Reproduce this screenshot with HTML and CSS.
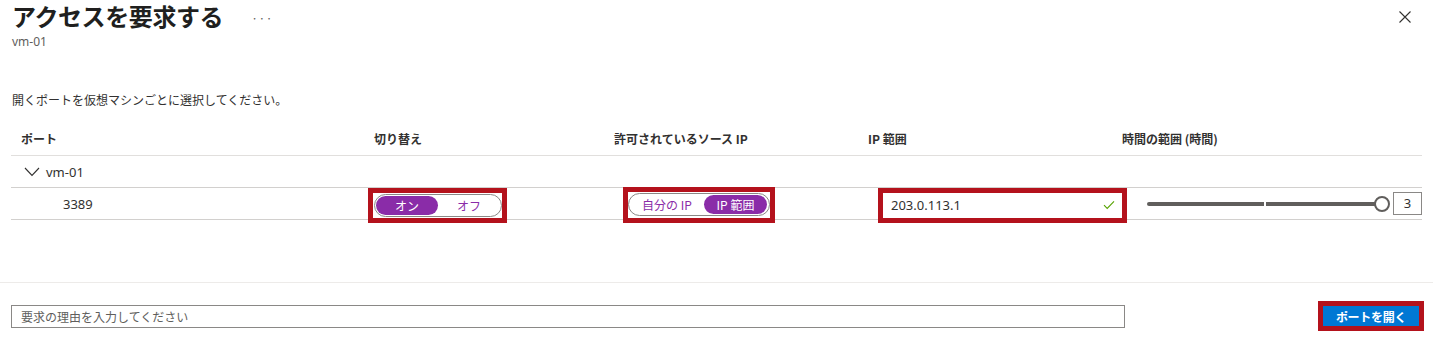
FILE: index.html
```html
<!DOCTYPE html>
<html lang="ja">
<head>
<meta charset="utf-8">
<link rel="stylesheet" href="styles.css">
</head>
<body>
<div class="page">
  <div class="top">
    <div class="titles">
      <div class="title-line">
        <h1 class="title">アクセスを要求する</h1>
        <span class="more">···</span>
      </div>
      <div class="subtitle">vm-01</div>
    </div>
    <svg class="close" width="14" height="14" viewBox="0 0 14 14"><path d="M1.5 1.5 L12.5 12.5 M12.5 1.5 L1.5 12.5" stroke="#323130" stroke-width="1.1" fill="none"/></svg>
  </div>

  <p class="intro">開くポートを仮想マシンごとに選択してください。</p>

  <div class="table">
    <div class="row head">
      <div class="h">ポート</div>
      <div class="h">切り替え</div>
      <div class="h">許可されているソース IP</div>
      <div class="h">IP 範囲</div>
      <div class="h">時間の範囲 (時間)</div>
    </div>
    <div class="row group">
      <div class="vm">
        <svg class="chev" width="16" height="10" viewBox="0 0 16 10"><path d="M1 1 L8 8.5 L15 1" stroke="#323130" stroke-width="1.1" fill="none"/></svg>
        <span>vm-01</span>
      </div>
    </div>
    <div class="row item">
      <div class="c port">3389</div>
      <div class="c c2">
        <div class="mark mark-toggle">
          <div class="pill">
            <span class="seg on">オン</span>
            <span class="seg">オフ</span>
          </div>
        </div>
      </div>
      <div class="c c3">
        <div class="mark mark-src">
          <div class="pill pill-src">
            <span class="seg seg-mine">自分の IP</span>
            <span class="seg on seg-range">IP 範囲</span>
          </div>
        </div>
      </div>
      <div class="c c4">
        <div class="mark mark-ip">
          <div class="ipfield">
            <span>203.0.113.1</span>
            <svg width="12" height="10" viewBox="0 0 12 10"><path d="M1 5.2 L4.2 8.4 L11 1.4" stroke="#57a300" stroke-width="1.1" fill="none"/></svg>
          </div>
        </div>
      </div>
      <div class="c c5">
        <div class="slider">
          <div class="track"><span class="tick"></span></div>
          <span class="thumb"></span>
        </div>
        <div class="numbox">3</div>
      </div>
    </div>
  </div>

  <div class="footer">
    <div class="reason">要求の理由を入力してください</div>
    <div class="mark mark-btn">
      <button class="btn">ポートを開く</button>
    </div>
  </div>
</div>
</body>
</html>
```

FILE: styles.css
```css
* { box-sizing: border-box; }
html, body { margin: 0; padding: 0; background: #fff; }
body {
  font-family: "Noto Sans CJK JP", "Noto Sans", sans-serif;
  color: #323130;
  font-size: 12px;
  width: 1433px;
  height: 346px;
  overflow: hidden;
}
.page { padding: 0 11px 0 11px; }

.top { display: flex; justify-content: space-between; align-items: flex-start; height: 92px; }
.titles { padding-left: 1px; }
.title-line { display: flex; align-items: center; height: 32px; }
.title { margin: 0; font-size: 24px; font-weight: 700; line-height: 32px; letter-spacing: -0.4px; color: #201f1e; }
.more { margin-left: 28px; color: #605e5c; font-size: 12px; letter-spacing: 0.5px; margin-top: 2px; }
.subtitle { font-family: "Noto Sans", sans-serif; color: #605e5c; font-size: 12px; line-height: 16px; margin-top: 2px; }
.close { margin-top: 10px; margin-right: 10px; }

.intro { margin: 0; line-height: 16px; height: 30px; padding-left: 1px; font-size: 12px; }

.table { width: 1411px; }
.row { display: grid; grid-template-columns: 353px 240px 254px 254px 310px; grid-template-rows: 100%; border-bottom: 1px solid #e1dfdd; align-items: center; }
.row.head { height: 34px; font-weight: 700; }
.h { padding-left: 10px; white-space: nowrap; }
.row.group { height: 32px; display: flex; border-bottom-color: #d2d0ce; }
.row.item { height: 32px; border-bottom-color: #d2d0ce; }
.c { white-space: nowrap; height: 31px; display: flex; align-items: center; }

.vm { display: flex; align-items: center; padding-left: 13px; font-family: "Noto Sans", sans-serif; font-size: 13px; }
.chev { margin-right: 6px; margin-top: 1px; }
.port { padding-left: 52px; font-family: "Noto Sans", sans-serif; font-size: 13px; }

.mark { border: 5px solid #b4121c; background: #fff; display: inline-flex; flex: none; margin-top: 3px; }
.c2 { padding-left: 4px; }
.mark-toggle { width: 139px; height: 35px; padding: 1px 0 1px 1px; overflow: hidden; }
.pill { display: flex; align-items: center; height: 23px; border: 1px solid #8a8886; border-radius: 12px; padding: 1px; width: 132px; }
.seg { flex: 1; text-align: center; color: #8a2ca8; font-size: 12px; line-height: 19px; height: 19px; border-radius: 10px; }
.seg.on { background: #8a2ca8; color: #fff; }
.mark-toggle .seg.on { flex: 0 0 62px; }

.c3 { padding-left: 19px; }
.mark-src { width: 152px; height: 36px; padding: 1px 0 1px 0; }
.pill-src { width: 142px; }
.seg-mine { flex: 0 0 74px; }
.seg-range { flex: 0 0 63px; font-size: 12px; }

.c4 { padding-left: 20px; }
.mark-ip { width: 249px; height: 35px; padding: 0; }
.ipfield { flex: 1; display: flex; align-items: center; justify-content: space-between; padding: 0 7px 0 8px; font-family: "Noto Sans", sans-serif; font-size: 13px; }

.c5 { padding-left: 35px; padding-right: 0; }
.slider { position: relative; width: 245px; height: 18px; display: flex; align-items: center; }
.track { position: relative; width: 232px; height: 4px; background: #605e5c; border-radius: 2px; }
.tick { position: absolute; left: 117px; top: 0; width: 2px; height: 4px; background: #fff; }
.thumb { position: absolute; right: 2px; top: 1px; width: 16px; height: 16px; border: 2px solid #605e5c; border-radius: 50%; background: #fff; }
.numbox { width: 29px; height: 23px; border: 1px solid #8a8886; margin-left: 1px; text-align: center; line-height: 21px; font-family: "Noto Sans", sans-serif; font-size: 13px; }

.footer { margin-top: 62px; border-top: 1px solid #edebe9; width: 1433px; margin-left: -11px; padding: 16px 9px 0 11px; display: flex; justify-content: space-between; align-items: center; }
.reason { width: 1114px; height: 23px; margin-top: 2px; border: 1px solid #8a8886; padding-left: 9px; line-height: 21px; color: #605e5c; font-size: 12px; }
.mark-btn { margin-top: 2px; padding: 0; }
.btn { font-family: inherit; border: none; background: #0078d4; color: #fff; font-weight: 700; font-size: 12px; width: 96px; height: 20px; padding: 0; letter-spacing: -0.3px; }
```
